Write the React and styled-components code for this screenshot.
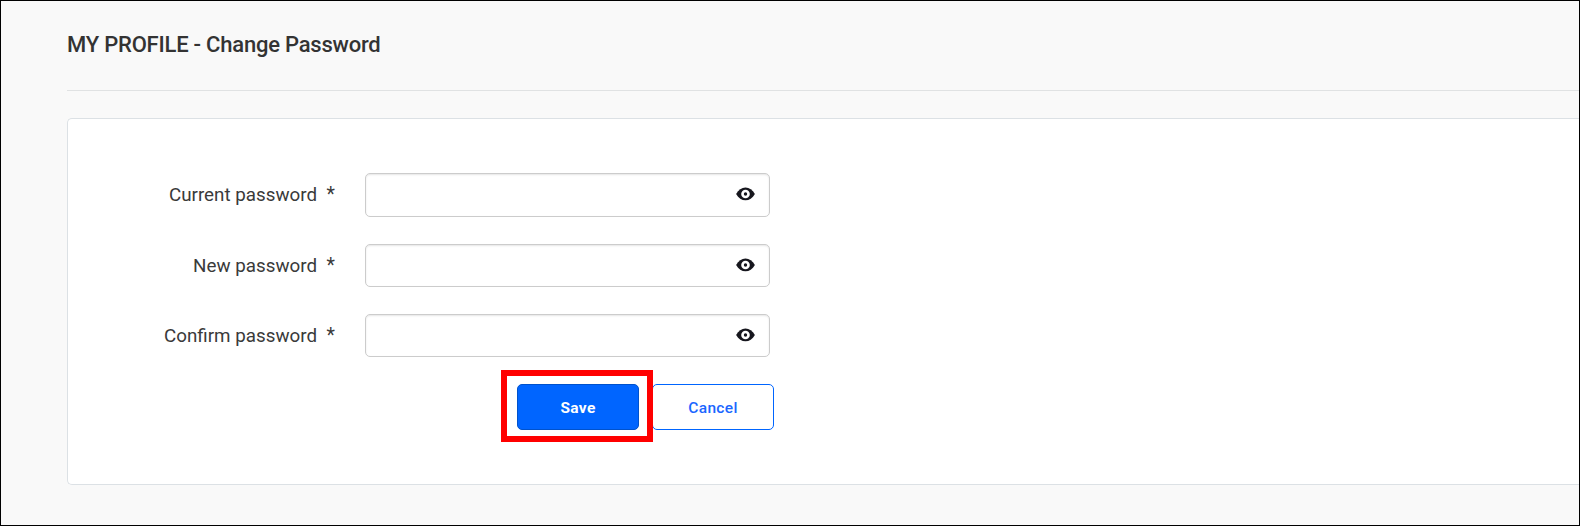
import React from 'react';
import styled, { createGlobalStyle } from 'styled-components';

const GlobalStyle = createGlobalStyle`
  * { box-sizing: border-box; }
  body { margin: 0; font-family: Roboto, sans-serif; color: #333; }
`;

const Page = styled.div`
  width: 1580px;
  height: 526px;
  padding-left: 66px;
  border: 1px solid #000;
  background: #f9f9f9;
  overflow: hidden;
`;

const Header = styled.header`
  height: 90px;
  padding-top: 30px;
  border-bottom: 1px solid #e0e2e3;
`;

const Title = styled.h1`
  margin: 0;
  font-size: 22px;
  line-height: 28px;
  font-weight: 500;
  letter-spacing: -0.22px;
  white-space: nowrap;
`;

const Card = styled.form`
  height: 367px;
  margin-top: 27px;
  padding: 54px 0 0 67px;
  border: 1px solid #dce1e5;
  border-right: 0;
  border-radius: 5px 0 0 5px;
  background: #fff;
`;

const Row = styled.div`
  display: flex;
  height: ${(p) => p.$height}px;
  margin-bottom: 27px;
`;

const Label = styled.label`
  width: 182px;
  line-height: 44px;
  font-size: 18.8px;
  color: #3a3a3a;
  text-align: right;
  white-space: nowrap;
`;

const Required = styled.span`
  width: 18px;
  line-height: 43px;
  font-size: 19.5px;
  color: #3a3a3a;
  text-align: right;
`;

const Field = styled.div`
  display: flex;
  align-items: center;
  width: 405px;
  margin-left: 30px;
  padding-right: 14.5px;
  border: 1px solid #ccc;
  border-radius: 5px;
  box-shadow: inset 0 1px 2px rgba(0, 0, 0, 0.1);
`;

const Input = styled.input`
  flex: 1;
  min-width: 0;
  height: 100%;
  border: 0;
  outline: 0;
  background: transparent;
  font: inherit;
`;

const Eye = styled.svg`
  width: 19px;
  height: 14px;
  margin-top: -2px;
`;

const Actions = styled.div`
  display: flex;
  margin: -14px 0 0 366px;
`;

const Highlight = styled.div`
  position: relative;
  width: 152px;
  height: 72px;
  padding: 8px 10px;
  border: 6px solid #f00;
  z-index: 1;
`;

const Button = styled.button`
  width: 122px;
  height: 46px;
  padding: 2px 0 0;
  border: 1px solid ${(p) => (p.$primary ? '#0052cc' : '#0065ff')};
  border-radius: 5px;
  background: ${(p) => (p.$primary ? '#0065ff' : '#fff')};
  color: ${(p) => (p.$primary ? '#fff' : '#1a66ff')};
  font: ${(p) => (p.$primary ? 700 : 500)} 15.5px/20px Roboto, sans-serif;
  letter-spacing: 0.35px;
`;

const CancelButton = styled(Button)`
  margin: 14px 0 0 -1px;
`;

const fields = [
  { name: 'current', label: 'Current password', height: 44 },
  { name: 'new', label: 'New password', height: 43 },
  { name: 'confirm', label: 'Confirm password', height: 43 },
];

const EyeIcon = () => (
  <Eye viewBox="0 0 19 14">
    <path
      d="M9.500.5C5.700.5 2.500 3 .1 7c2.400 4 5.600 6.300 9.400 6.300S16.500 11 18.900 7C16.500 3 13.300.5 9.500.5Z"
      fill="#16161d"
    />
    <circle cx="9.500" cy="7" r="4.300" fill="#fff" />
    <circle cx="9.500" cy="7" r="1.700" fill="#16161d" />
  </Eye>
);

export default function App() {
  return (
    <Page>
      <GlobalStyle />
      <Header>
        <Title>MY PROFILE - Change Password</Title>
      </Header>
      <Card>
        {fields.map((f) => (
          <Row key={f.name} $height={f.height}>
            <Label htmlFor={f.name}>{f.label}</Label>
            <Required>*</Required>
            <Field>
              <Input id={f.name} type="password" />
              <EyeIcon />
            </Field>
          </Row>
        ))}
        <Actions>
          <Highlight>
            <Button type="button" $primary>Save</Button>
          </Highlight>
          <CancelButton type="button">Cancel</CancelButton>
        </Actions>
      </Card>
    </Page>
  );
}
